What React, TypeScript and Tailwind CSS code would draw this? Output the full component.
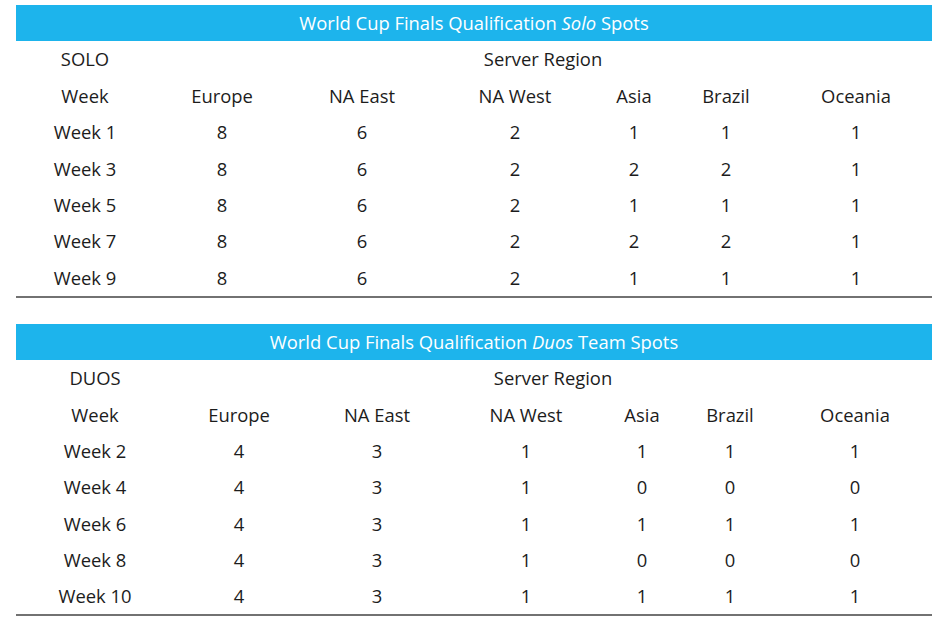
const solo = {
  title: "Solo",
  suffix: "Spots",
  label: "SOLO",
  cols: "grid-cols-[138px_136px_144px_162px_76px_108px_152px]",
  span: "col-span-6",
  rows: [
    ["Week 1", 8, 6, 2, 1, 1, 1],
    ["Week 3", 8, 6, 2, 2, 2, 1],
    ["Week 5", 8, 6, 2, 1, 1, 1],
    ["Week 7", 8, 6, 2, 2, 2, 1],
    ["Week 9", 8, 6, 2, 1, 1, 1],
  ],
}

const duos = {
  title: "Duos",
  suffix: "Team Spots",
  label: "DUOS",
  cols: "grid-cols-[158px_130px_146px_152px_80px_96px_154px]",
  span: "col-span-6",
  rows: [
    ["Week 2", 4, 3, 1, 1, 1, 1],
    ["Week 4", 4, 3, 1, 0, 0, 0],
    ["Week 6", 4, 3, 1, 1, 1, 1],
    ["Week 8", 4, 3, 1, 0, 0, 0],
    ["Week 10", 4, 3, 1, 1, 1, 1],
  ],
}

const regions = ["Europe", "NA East", "NA West", "Asia", "Brazil", "Oceania"]

function SpotsTable({ data }: { data: typeof solo }) {
  const cell = "flex h-[36.4px] items-center justify-center"
  return (
    <div className="w-[916px]">
      <div className="flex h-9 items-center justify-center bg-[#1db4ec] text-white">
        <span>
          World Cup Finals Qualification <em>{data.title}</em> {data.suffix}
        </span>
      </div>
      <div className={`grid ${data.cols} border-b-2 border-[#727272]`}>
        <div className={cell}>{data.label}</div>
        <div className={`${cell} ${data.span}`}>Server Region</div>
        <div className={cell}>Week</div>
        {regions.map((r) => (
          <div key={r} className={cell}>
            {r}
          </div>
        ))}
        {data.rows.map((row) =>
          row.map((v, i) => (
            <div key={`${row[0]}-${i}`} className={cell}>
              {v}
            </div>
          ))
        )}
      </div>
    </div>
  )
}

export default function App() {
  return (
    <div
      className="flex min-h-[633px] flex-col gap-[26px] bg-white pl-4 pt-[5px] text-[18.4px] text-[#1c1c1c]"
      style={{ fontFamily: '"Open Sans", sans-serif' }}
    >
      <SpotsTable data={solo} />
      <SpotsTable data={duos} />
    </div>
  )
}
